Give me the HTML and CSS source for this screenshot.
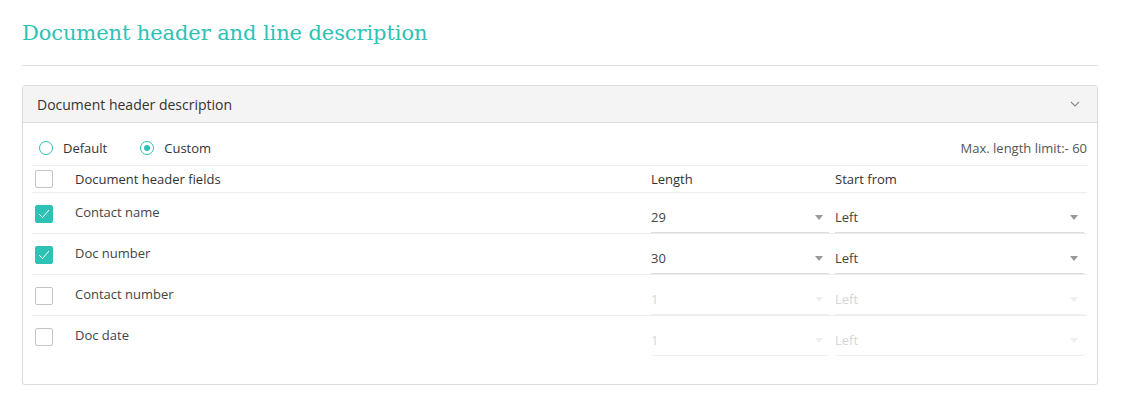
FILE: index.html
```html
<!DOCTYPE html>
<html lang="en">
<head>
    <meta charset="UTF-8">
    <title>Document header and line description</title>
    <link rel="stylesheet" href="styles.css">
</head>
<body>
    <h1 class="page-title">Document header and line description</h1>

    <div class="panel">
        <div class="panel-head">
            <span>Document header description</span>
            <svg class="chevron" width="10" height="6" viewBox="0 0 10 6"><path d="M1 1 L5 5 L9 1" fill="none" stroke="#7d8b99" stroke-width="1.1"/></svg>
        </div>
        <div class="panel-body">
            <div class="mode-row">
                <label class="radio"><span class="radio-dot"></span>Default</label>
                <label class="radio"><span class="radio-dot on"></span>Custom</label>
                <span class="limit">Max. length limit:- 60</span>
            </div>

            <div class="grid-row head-row">
                <span class="check"></span>
                <span>Document header fields</span>
                <span>Length</span>
                <span class="start-col">Start from</span>
            </div>

            <div class="grid-row">
                <span class="check on"><svg width="12" height="10" viewBox="0 0 12 10"><path d="M1 5 L4.5 8.5 L11 1" fill="none" stroke="#fff" stroke-width="1"/></svg></span>
                <span class="field">Contact name</span>
                <div class="select"><span>29</span><i class="caret"></i></div>
                <div class="select start"><span>Left</span><i class="caret"></i></div>
            </div>

            <div class="grid-row">
                <span class="check on"><svg width="12" height="10" viewBox="0 0 12 10"><path d="M1 5 L4.5 8.5 L11 1" fill="none" stroke="#fff" stroke-width="1"/></svg></span>
                <span class="field">Doc number</span>
                <div class="select"><span>30</span><i class="caret"></i></div>
                <div class="select start"><span>Left</span><i class="caret"></i></div>
            </div>

            <div class="grid-row">
                <span class="check"></span>
                <span class="field">Contact number</span>
                <div class="select off"><span>1</span><i class="caret"></i></div>
                <div class="select start off"><span>Left</span><i class="caret"></i></div>
            </div>

            <div class="grid-row last">
                <span class="check"></span>
                <span class="field">Doc date</span>
                <div class="select off"><span>1</span><i class="caret"></i></div>
                <div class="select start off"><span>Left</span><i class="caret"></i></div>
            </div>
        </div>
    </div>
</body>
</html>
```

FILE: styles.css
```css
body {
    margin: 0;
    padding: 0 23px 0 22px;
    font-family: "Open Sans", Arial, sans-serif;
    font-size: 13px;
    color: #444;
    background-color: #fff;
}

.page-title {
    margin: 0;
    padding: 17px 0 16px;
    font-family: "DejaVu Serif", "Liberation Serif", serif;
    font-size: 21px;
    line-height: 32px;
    font-weight: normal;
    letter-spacing: -0.1px;
    color: #2ec2b4;
    border-bottom: 1px solid #e2e2e2;
}

.panel {
    margin-top: 19px;
    border: 1px solid #dcdcdc;
    border-radius: 3px;
    box-shadow: 0 1px 2px rgba(0, 0, 0, 0.06);
    height: 298px;
}

.panel-head {
    display: flex;
    justify-content: space-between;
    align-items: center;
    height: 36px;
    padding: 0 17px 0 14px;
    background-color: #f4f4f4;
    border-bottom: 1px solid #dcdcdc;
    font-size: 14px;
    color: #333;
}

.panel-body {
    padding: 0 10px 0 9px;
}

.mode-row {
    display: flex;
    align-items: center;
    height: 18px;
    padding: 16px 0 8px;
    border-bottom: 1px solid #ececec;
}

.radio {
    display: flex;
    align-items: center;
    margin-right: 33px;
    margin-left: 7px;
    color: #333;
}

.radio + .radio {
    margin-left: 0;
}

.radio-dot {
    width: 12px;
    height: 12px;
    border: 1.5px solid #2ec2b4;
    border-radius: 50%;
    margin-right: 10px;
    position: relative;
}

.radio-dot.on::after {
    content: "";
    position: absolute;
    left: 3px;
    top: 3px;
    width: 6px;
    height: 6px;
    border-radius: 50%;
    background-color: #2ec2b4;
}

.limit {
    margin-left: auto;
    color: #555;
}

.grid-row {
    display: grid;
    grid-template-columns: 43px 1fr 178px 258px;
    align-items: start;
    height: 40px;
    border-bottom: 1px solid #ececec;
}

.head-row {
    height: 26px;
    align-items: center;
    color: #333;
}

.grid-row.last {
    border-bottom: none;
}

.check {
    display: flex;
    align-items: center;
    justify-content: center;
    width: 16px;
    height: 16px;
    margin-left: 3px;
    border: 1px solid #c4c4c4;
    border-radius: 2px;
    background-color: #fff;
}

.grid-row .check {
    margin-top: 12px;
}

.head-row .check {
    margin-top: 0;
}

.check.on {
    background-color: #2ec2b4;
    border-color: #2ec2b4;
}

.field {
    margin-top: 10px;
    line-height: 18px;
    color: #444;
}

.start-col {
    padding-left: 6px;
}

.select {
    align-self: end;
    display: flex;
    justify-content: space-between;
    align-items: center;
    height: 20px;
    padding: 0 6px 5px 0;
    border-bottom: 1px solid #dcdcdc;
    color: #444;
}

.select.start {
    margin: 0 3px 0 6px;
}

.caret {
    width: 0;
    height: 0;
    border-left: 4.5px solid transparent;
    border-right: 4.5px solid transparent;
    border-top: 5px solid #999;
}

.select.off {
    color: #d6d6d6;
    border-bottom-color: #efefef;
}

.select.off .caret {
    border-top-color: #efefef;
}
```
